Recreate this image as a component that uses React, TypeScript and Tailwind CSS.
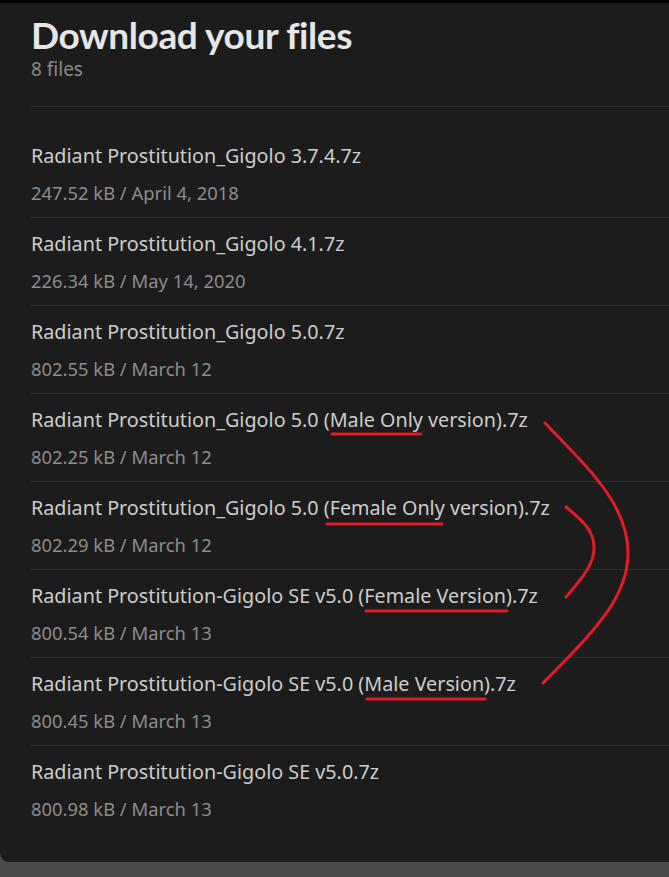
const files = [
  { name: 'Radiant Prostitution_Gigolo 3.7.4.7z', meta: '247.52 kB / April 4, 2018' },
  { name: 'Radiant Prostitution_Gigolo 4.1.7z', meta: '226.34 kB / May 14, 2020' },
  { name: 'Radiant Prostitution_Gigolo 5.0.7z', meta: '802.55 kB / March 12' },
  { name: 'Radiant Prostitution_Gigolo 5.0 (Male Only version).7z', meta: '802.25 kB / March 12' },
  { name: 'Radiant Prostitution_Gigolo 5.0 (Female Only version).7z', meta: '802.29 kB / March 12' },
  { name: 'Radiant Prostitution-Gigolo SE v5.0 (Female Version).7z', meta: '800.54 kB / March 13' },
  { name: 'Radiant Prostitution-Gigolo SE v5.0 (Male Version).7z', meta: '800.45 kB / March 13' },
  { name: 'Radiant Prostitution-Gigolo SE v5.0.7z', meta: '800.98 kB / March 13' },
];

function Annotations() {
  return (
    <svg
      className="pointer-events-none absolute left-0 top-0"
      width="669"
      height="877"
      viewBox="0 0 669 877"
      fill="none"
      stroke="#e21b25"
      strokeWidth="3"
      strokeLinecap="round"
    >
      <path d="M332 434 L421 434" />
      <path d="M327 524 L442 524" />
      <path d="M366 611 L507 611" />
      <path d="M367 699 L485 699" />
      <path d="M545 423 C590 470 628 505 628 553 C628 600 590 635 543 683" />
      <path d="M566 507 C585 522 594 532 594 548 C594 565 582 578 566 597" />
    </svg>
  );
}

export default function App() {
  return (
    <div className="relative h-[877px] w-[669px] overflow-hidden bg-[#4b4b4b] pt-[3px]" style={{ fontFamily: '"Noto Sans", "Open Sans", sans-serif' }}>
      <div className="absolute left-0 top-0 h-[3px] w-full bg-black" />
      <div className="h-[859px] rounded-bl-[9px] bg-[#1c1c1c] pl-[31px]">
        <header className="pt-[11px]">
          <h1 className="font-['Lato',sans-serif] text-[37px] font-bold leading-[42px] tracking-[-0.4px] text-[#e6e6e6]">Download your files</h1>
          <p className="mt-[1px] text-[19px] leading-[24px] text-[#8a8a8a]">8 files</p>
        </header>
        <div className="mt-[25px] border-t border-[#2e2e2e] pt-[23px]">
          {files.map((f, i) => (
            <div key={f.name} className={i < files.length - 1 ? 'border-b border-[#2e2e2e]' : ''}>
              <div className="pt-[12px] text-[19.75px] leading-[28px] text-[#cccccc]">{f.name}</div>
              <div className="pt-[9px] pb-[10px] text-[18.4px] leading-[28px] text-[#8c8c8c]">{f.meta}</div>
            </div>
          ))}
        </div>
      </div>
      <Annotations />
    </div>
  );
}
